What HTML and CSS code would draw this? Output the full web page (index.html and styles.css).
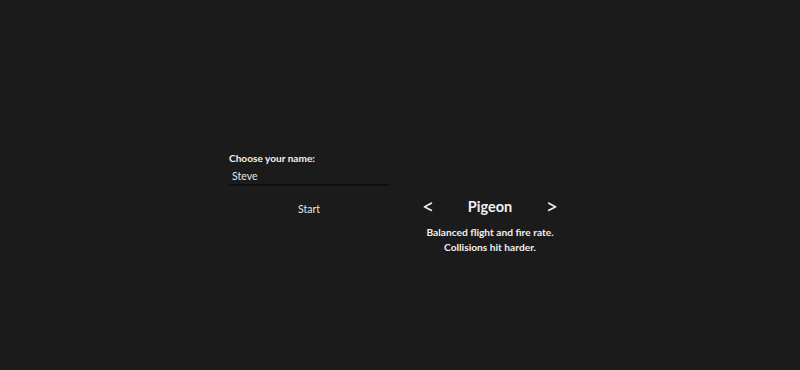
FILE: index.html
```html
<!DOCTYPE html>
<html lang="en">
<head>
    <meta charset="UTF-8">
    <meta name="viewport" content="width=device-width, initial-scale=1.0">
    <title>Menu</title>
    <link rel="stylesheet" href="styles.css">
</head>
<body>
    <div class="menu">
        <div class="name-box">
            <label for="player-name" class="name-label">Choose your name:</label>
            <input type="text" id="player-name" class="name-input" value="Steve">
        </div>
        <button class="start-btn">Start</button>
        <div class="picker">
            <button class="arrow">&lt;</button>
            <span class="bird-name">Pigeon</span>
            <button class="arrow">&gt;</button>
        </div>
        <p class="bird-desc">Balanced flight and fire rate.<br>Collisions hit harder.</p>
    </div>
</body>
</html>
```

FILE: styles.css
```css
body {
    margin: 0;
    background-color: #1b1b1b;
    font-family: Lato, sans-serif;
    color: #f0f0f0;
}

.menu {
    display: grid;
    grid-template-columns: 160px 140px;
    column-gap: 31px;
    margin: 150px 0 0 229px;
}

.name-box {
    grid-column: 1;
    display: flex;
    flex-direction: column;
    gap: 2px;
}

.name-label {
    font-size: 10.1px;
    font-weight: 700;
    line-height: 16px;
}

.name-input {
    font-family: inherit;
    font-size: 10.5px;
    color: #e6e6e6;
    background-color: transparent;
    border: none;
    border-bottom: 2px solid #0f0f0f;
    padding: 0 3px;
    height: 16px;
    outline: none;
}

.start-btn {
    grid-column: 1;
    grid-row: 2;
    align-self: end;
    justify-self: center;
    background: none;
    border: none;
    font-family: inherit;
    font-size: 10.5px;
    color: #e6e6e6;
    padding: 0;
    line-height: 16px;
}

.picker {
    grid-column: 2;
    grid-row: 2;
    display: flex;
    justify-content: space-between;
    align-items: center;
    margin-top: 9px;
    height: 22px;
}

.arrow {
    background: none;
    border: none;
    font-family: inherit;
    font-size: 21px;
    line-height: 22px;
    color: #f0f0f0;
    padding: 0 2px;
}

.bird-name {
    font-size: 14.5px;
    font-weight: 700;
}

.bird-desc {
    grid-column: 2;
    grid-row: 3;
    margin: 8px 0 0;
    text-align: center;
    font-size: 10.2px;
    font-weight: 700;
    line-height: 15px;
}
```
